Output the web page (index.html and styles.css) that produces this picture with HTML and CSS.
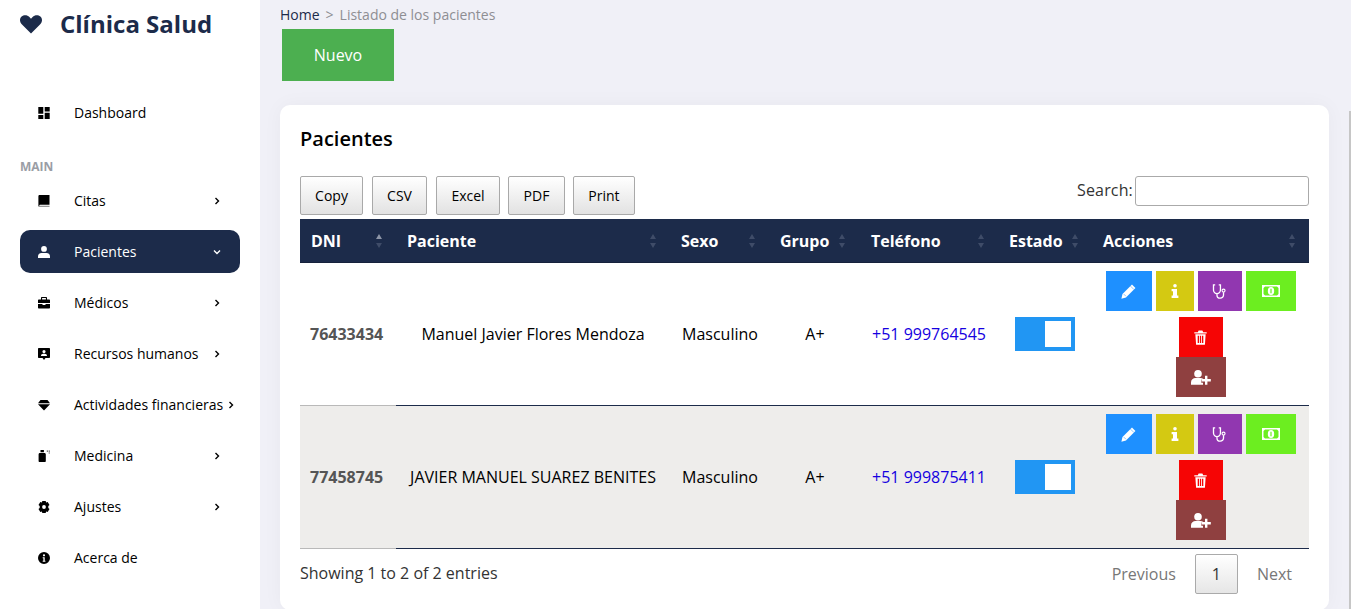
FILE: index.html
```html
<!DOCTYPE html>
<html lang="es">
<head>
<meta charset="utf-8">
<title>Clínica Salud</title>
<link rel="stylesheet" href="styles.css">
</head>
<body>
<svg class="defs" width="0" height="0" aria-hidden="true">
  <symbol id="i-pencil" viewBox="0 0 16 16"><path d="M11.700 .6 15.400 4.300 5.300 14.400 .4 15.600 1.600 10.700Z" fill="currentColor"/><path d="M10.200 2.300 13.700 5.800M3 10.800 5.200 13" stroke="#1e90ff" stroke-width=".8" opacity=".7"/></symbol>
  <symbol id="i-info" viewBox="0 0 8 14"><circle cx="4" cy="1.800" r="1.800" fill="currentColor"/><path d="M.6 5h5.400v6.600H7.400V14H.6V11.600H2V7.300H.6Z" fill="currentColor"/></symbol>
  <symbol id="i-steth" viewBox="0 0 16 16"><path d="M3.400 1H1.600V6.500a3.700 3.700 0 0 0 7.400 0V1H7.200M5.300 10.200v1.400a3.500 3.500 0 0 0 7 0V8.800" fill="none" stroke="currentColor" stroke-width="1.400"/><circle cx="12.300" cy="7" r="1.600" fill="none" stroke="currentColor" stroke-width="1.200"/></symbol>
  <symbol id="i-money" viewBox="0 0 18 12"><path fill-rule="evenodd" d="M0 0h18v12H0ZM3 1.500 1.500 3V9L3 10.500H15L16.500 9V3L15 1.500Z" fill="currentColor"/><ellipse cx="9" cy="6" rx="3.200" ry="4" fill="currentColor"/><path d="M8.400 3.700h1.200v4.600H8.400Z" fill="#6cee20"/></symbol>
  <symbol id="i-trash" viewBox="0 0 14 16"><path fill-rule="evenodd" d="M.4 2.400h3.700L5 .4h4l.9 2h3.700v1.400H.4ZM1.500 4.600h11L11.700 15.600H2.300ZM4 6.200v7.600h1.400V6.200ZM6.300 6.200v7.600h1.400V6.200ZM8.600 6.200v7.600h1.400V6.200Z" fill="currentColor"/></symbol>
  <symbol id="i-useradd" viewBox="0 0 20 15"><circle cx="7" cy="3.800" r="3.800" fill="currentColor"/><path d="M0 14.800V12.500C0 9.600 2.200 8 4.500 8H9.500C10.500 8 11.300 8.300 12 8.800V9.500H10.300V12.700H12V14.800Z" fill="currentColor"/><path d="M14 5.800h2.400v3.300h3.400v2.400h-3.400v3.300H14v-3.300h-3.400V9.100H14Z" fill="currentColor"/></symbol>
</svg>
<div class="app">
  <aside class="sidebar">
    <div class="brand">
      <svg class="brand-heart" viewBox="0 0 22 19"><path d="M11 18.600 2 9.600C-.6 7-.6 3.300 1.600 1.500 3.900-.5 7.400-.2 9.400 2L11 3.700 12.600 2C14.600-.2 18.100-.5 20.400 1.500 22.600 3.300 22.600 7 20 9.600Z" fill="currentColor"/></svg>
      <span class="brand-name">Clínica Salud</span>
    </div>
    <nav class="nav">
      <a class="nav-item">
        <svg class="nav-icon" viewBox="0 0 12 12"><path d="M.3 0h5v6.800h-5ZM6.700 0h5v4.500h-5ZM.3 8h5v4h-5ZM6.700 5.700h5V12h-5Z" fill="currentColor"/></svg>
        <span class="nav-label">Dashboard</span>
      </a>
      <div class="nav-title">MAIN</div>
      <a class="nav-item">
        <svg class="nav-icon" viewBox="0 0 12 12"><path d="M1.700 0H11.500V9.800H2.200C1.500 9.800 1.200 10.400 1.300 11.200L1.700 12C.9 12 .4 11.500.4 10.800V1.300C.4.500.9 0 1.700 0Z" fill="currentColor"/><path d="M1.700 10.700H11.500V12H1.700Z" fill="currentColor" opacity=".4"/></svg>
        <span class="nav-label">Citas</span>
        <svg class="chev" viewBox="0 0 8 8"><path d="M2.500 1 5.500 4 2.500 7" fill="none" stroke="currentColor" stroke-width="1.400"/></svg>
      </a>
      <a class="nav-item active">
        <svg class="nav-icon" viewBox="0 0 12 12"><circle cx="6" cy="2.900" r="2.900" fill="currentColor"/><path d="M0 12V10.300C0 8.300 1.600 6.900 3.500 6.900H8.500C10.400 6.900 12 8.300 12 10.300V12Z" fill="currentColor"/></svg>
        <span class="nav-label">Pacientes</span>
        <svg class="chev" viewBox="0 0 8 8"><path d="M1 2.500 4 5.500 7 2.500" fill="none" stroke="currentColor" stroke-width="1.400"/></svg>
      </a>
      <a class="nav-item">
        <svg class="nav-icon" viewBox="0 0 12 12"><path fill-rule="evenodd" d="M4 0h4c.6 0 1 .4 1 1v1.500h2c.6 0 1 .4 1 1V6H0V3.500c0-.6.4-1 1-1h2V1c0-.6.4-1 1-1ZM4.100 1.100V2.500H7.900V1.100ZM0 7h4.500v1h3V7H12v3.500c0 .6-.4 1-1 1H1c-.6 0-1-.4-1-1Z" fill="currentColor"/></svg>
        <span class="nav-label">Médicos</span>
        <svg class="chev" viewBox="0 0 8 8"><path d="M2.500 1 5.500 4 2.500 7" fill="none" stroke="currentColor" stroke-width="1.400"/></svg>
      </a>
      <a class="nav-item">
        <svg class="nav-icon" viewBox="0 0 12 12"><path fill-rule="evenodd" d="M1 0h10c.6 0 1 .4 1 1v8c0 .6-.4 1-1 1H7.500L6 12 4.500 10H1c-.6 0-1-.4-1-1V1c0-.6.4-1 1-1ZM6 2a1.600 1.600 0 1 0 0 3.200A1.600 1.600 0 0 0 6 2ZM3 8h6c0-1.500-1-2.300-2.200-2.300H5.200C4 5.700 3 6.500 3 8Z" fill="currentColor"/></svg>
        <span class="nav-label">Recursos humanos</span>
        <svg class="chev" viewBox="0 0 8 8"><path d="M2.500 1 5.500 4 2.500 7" fill="none" stroke="currentColor" stroke-width="1.400"/></svg>
      </a>
      <a class="nav-item">
        <svg class="nav-icon" viewBox="0 0 12 12"><path d="M2.500 1h7L12 4.200H0ZM0 5.300h12L6 11.500Z" fill="currentColor"/></svg>
        <span class="nav-label">Actividades financieras</span>
        <svg class="chev chev-tight" viewBox="0 0 8 8"><path d="M2.500 1 5.500 4 2.500 7" fill="none" stroke="currentColor" stroke-width="1.400"/></svg>
      </a>
      <a class="nav-item">
        <svg class="nav-icon" viewBox="0 0 12 12"><path d="M2.500 0h3.400v2.300H2.500ZM1.900 3h4.500C7.300 3 7.800 3.600 7.800 4.400V11c0 .6-.4 1-1 1H1.600C1 12 .6 11.600.6 11V4.300C.6 3.600 1.200 3 1.900 3Z" fill="currentColor"/><path d="M8.800.6h1.100v1.100H8.800ZM10.700.6h1.100v1.100h-1.100ZM10.700 2.400h1.100v1.100h-1.100Z" fill="currentColor" opacity=".75"/></svg>
        <span class="nav-label">Medicina</span>
        <svg class="chev" viewBox="0 0 8 8"><path d="M2.500 1 5.500 4 2.500 7" fill="none" stroke="currentColor" stroke-width="1.400"/></svg>
      </a>
      <a class="nav-item">
        <svg class="nav-icon" viewBox="0 0 12 12"><path fill-rule="evenodd" d="M4.300 0h3.400l.4 1.600 1.600-.5L11.500 4l-1.200 1.100v1.800L11.500 8l-1.800 2.900-1.600-.5L7.700 12H4.300l-.4-1.600-1.600.5L.5 8l1.200-1.100V5.100L.5 4l1.800-2.900 1.600.5ZM6 4.100a1.900 1.900 0 1 0 0 3.800 1.900 1.900 0 0 0 0-3.800Z" fill="currentColor"/></svg>
        <span class="nav-label">Ajustes</span>
        <svg class="chev" viewBox="0 0 8 8"><path d="M2.500 1 5.500 4 2.500 7" fill="none" stroke="currentColor" stroke-width="1.400"/></svg>
      </a>
      <a class="nav-item">
        <svg class="nav-icon" viewBox="0 0 12 12"><path fill-rule="evenodd" d="M6 0a6 6 0 1 1 0 12A6 6 0 0 1 6 0ZM6 2.200a1.100 1.100 0 1 0 0 2.200 1.100 1.100 0 0 0 0-2.200ZM4.700 5.200v1.100h.7v2.400h-.7v1.100h2.700V8.700h-.7V5.200Z" fill="currentColor"/></svg>
        <span class="nav-label">Acerca de</span>
      </a>
    </nav>
  </aside>
  <main class="main">
    <div class="crumbs"><a class="crumb-home">Home</a><span class="crumb-sep">&gt;</span><span class="crumb-current">Listado de los pacientes</span></div>
    <button class="btn-new">Nuevo</button>
    <section class="card">
      <h1 class="card-title">Pacientes</h1>
      <div class="toolbar">
        <div class="export">
          <button class="btn-export">Copy</button>
          <button class="btn-export">CSV</button>
          <button class="btn-export">Excel</button>
          <button class="btn-export">PDF</button>
          <button class="btn-export">Print</button>
        </div>
        <label class="search">Search:<input class="search-input" type="search"></label>
      </div>
      <table class="table">
        <colgroup>
          <col class="c1"><col class="c2"><col class="c3"><col class="c4"><col class="c5"><col class="c6"><col class="c7">
        </colgroup>
        <thead>
          <tr>
            <th><span>DNI</span><i class="sort sort-up"></i></th>
            <th><span>Paciente</span><i class="sort"></i></th>
            <th><span>Sexo</span><i class="sort"></i></th>
            <th><span>Grupo</span><i class="sort"></i></th>
            <th><span>Teléfono</span><i class="sort"></i></th>
            <th><span>Estado</span><i class="sort"></i></th>
            <th><span>Acciones</span><i class="sort"></i></th>
          </tr>
        </thead>
        <tbody>
          <tr>
            <td class="dni">76433434</td>
            <td>Manuel Javier Flores Mendoza</td>
            <td class="sex">Masculino</td>
            <td class="grp">A+</td>
            <td class="tel">+51 999764545</td>
            <td><span class="switch"><span class="knob"></span></span></td>
            <td class="acts">
              <div class="act-row">
                <a class="act edit"><svg viewBox="0 0 16 16" class="ai"><use href="#i-pencil"/></svg></a>
                <a class="act info"><svg viewBox="0 0 8 14" class="ai ai-i"><use href="#i-info"/></svg></a>
                <a class="act steth"><svg viewBox="0 0 16 16" class="ai"><use href="#i-steth"/></svg></a>
                <a class="act money"><svg viewBox="0 0 18 12" class="ai ai-w"><use href="#i-money"/></svg></a>
              </div>
              <div class="act-row"><a class="act trash"><svg viewBox="0 0 14 16" class="ai"><use href="#i-trash"/></svg></a></div>
              <div class="act-row"><a class="act adduser"><svg viewBox="0 0 20 15" class="ai ai-u"><use href="#i-useradd"/></svg></a></div>
            </td>
          </tr>
          <tr class="alt">
            <td class="dni">77458745</td>
            <td>JAVIER MANUEL SUAREZ BENITES</td>
            <td class="sex">Masculino</td>
            <td class="grp">A+</td>
            <td class="tel">+51 999875411</td>
            <td><span class="switch"><span class="knob"></span></span></td>
            <td class="acts">
              <div class="act-row">
                <a class="act edit"><svg viewBox="0 0 16 16" class="ai"><use href="#i-pencil"/></svg></a>
                <a class="act info"><svg viewBox="0 0 8 14" class="ai ai-i"><use href="#i-info"/></svg></a>
                <a class="act steth"><svg viewBox="0 0 16 16" class="ai"><use href="#i-steth"/></svg></a>
                <a class="act money"><svg viewBox="0 0 18 12" class="ai ai-w"><use href="#i-money"/></svg></a>
              </div>
              <div class="act-row"><a class="act trash"><svg viewBox="0 0 14 16" class="ai"><use href="#i-trash"/></svg></a></div>
              <div class="act-row"><a class="act adduser"><svg viewBox="0 0 20 15" class="ai ai-u"><use href="#i-useradd"/></svg></a></div>
            </td>
          </tr>
        </tbody>
      </table>
      <div class="foot">
        <div class="info-text">Showing 1 to 2 of 2 entries</div>
        <div class="pager"><a class="page-link">Previous</a><a class="page-current">1</a><a class="page-link">Next</a></div>
      </div>
    </section>
  </main>
</div>
<div class="scroll-thumb"></div>
</body>
</html>
```
FILE: styles.css
```css
* { box-sizing: border-box; }
html, body { margin: 0; height: 100%; overflow: hidden; }
body { font-family: "Open Sans", sans-serif; font-size: 14px; color: #000; background: #f0f0f7; }
.defs { position: absolute; }
.app { display: flex; height: 609px; }
.scroll-thumb { position: absolute; right: 0; top: 111px; bottom: 0; width: 2px; background: #c6c6c6; }

.sidebar { width: 260px; flex: none; background: #fff; padding: 0 20px; }
.brand { display: flex; align-items: flex-start; height: 50px; color: #1c2b4a; }
.brand-heart { width: 22px; height: 19px; margin: 15px 18px 0 0; }
.brand-name { font-size: 24px; font-weight: 700; line-height: 48px; }
.nav { display: flex; flex-direction: column; padding-top: 41px; }
.nav-item { display: flex; align-items: center; height: 43px; margin-bottom: 8px; padding: 0 19px 0 18px; border-radius: 10px; color: #000; }
.nav-icon { width: 12px; height: 12px; flex: none; margin-right: 24px; }
.nav-label { flex: 1; white-space: nowrap; }
.chev { width: 8px; height: 8px; flex: none; }
.chev-tight { margin-left: 4px; }
.nav-title { font-size: 12px; font-weight: 700; color: #9a9da5; line-height: 16px; margin: 17px 0 4px; }
.nav-item.active { background: #1c2b4a; color: #fff; }

.main { flex: 1; min-width: 0; padding: 4px 22px 0 20px; }
.crumbs { display: flex; align-items: center; height: 21px; line-height: 21px; }
.crumb-home { color: #1c2b4a; }
.crumb-sep { color: #8e8e93; margin: 0 6px; }
.crumb-current { color: #8e8e93; }
.btn-new { display: block; width: 112px; height: 52px; margin: 4px 0 0 2px; border: 0; background: #4caf50; color: #fff; font: 16px "Open Sans", sans-serif; }
.card { margin-top: 24px; background: #fff; border-radius: 10px; padding: 20px 20px 0; height: 505px; box-shadow: 0 0 20px rgba(0,0,0,.04); }
.card-title { margin: 0; font-size: 20px; font-weight: 600; line-height: 27px; }
.toolbar { display: flex; justify-content: space-between; align-items: flex-start; margin-top: 24px; height: 43px; }
.export { display: flex; }
.btn-export { height: 39px; padding: 0; border: 1px solid #a9a9a9; border-radius: 2px; background: linear-gradient(#fff, #e2e2e2); color: #000; font: 14px "Open Sans", sans-serif; }
.btn-export:nth-child(1) { width: 63px; margin-right: 9px; }
.btn-export:nth-child(2) { width: 55px; margin-right: 9px; }
.btn-export:nth-child(3) { width: 64px; margin-right: 8px; }
.btn-export:nth-child(4) { width: 57px; margin-right: 8px; }
.btn-export:nth-child(5) { width: 62px; }
.search { display: flex; align-items: flex-start; gap: 2px; font-size: 16px; line-height: 28px; color: #333; height: 30px; letter-spacing: .01em; }
.search-input { width: 174px; height: 30px; border: 1px solid #aaa; border-radius: 3px; background: #fff; outline: 0; }

.table { width: 1009px; border-collapse: separate; border-spacing: 0; table-layout: fixed; font-size: 16px; }
.c1 { width: 96px; } .c2 { width: 274px; } .c3 { width: 99px; } .c4 { width: 90px; } .c5 { width: 139px; } .c6 { width: 94px; } .c7 { width: 217px; }
th { position: relative; height: 44px; padding: 0 0 0 11px; background: #1c2b4a; color: #fff; text-align: left; font-weight: 700; border-bottom: 1px solid #16223c; }
th:nth-child(5) { padding-left: 12px; }
.sort { position: absolute; right: 13px; top: 15px; width: 7px; height: 14px; }
.sort::before, .sort::after { content: ""; position: absolute; left: 0; border-left: 3.5px solid transparent; border-right: 3.5px solid transparent; }
.sort::before { top: 0; border-bottom: 5px solid #3f4c68; }
.sort::after { bottom: 0; border-top: 5px solid #3f4c68; }
.sort-up::before { border-bottom-color: #8d95a7; }
td { height: 143px; padding: 0; text-align: center; border-bottom: 1px solid #1c2b4a; vertical-align: middle; color: #000; }
td.dni { font-weight: 700; color: #555; text-align: left; padding-left: 10px; border-bottom-color: #b9b9b9; }
td.sex { padding-left: 1px; }
td.grp { padding-left: 2px; }
tr.alt td { background: #eeedeb; }
td.tel { color: #1500e0; padding-left: 1px; }
.switch { display: block; width: 60px; height: 34px; margin: 0 auto; background: #2196f3; position: relative; }
.knob { position: absolute; right: 4px; top: 4px; width: 26px; height: 26px; background: #fff; }
td.acts { padding: 0 0 6px; vertical-align: top; }
.act-row { display: flex; justify-content: center; }
.act-row:first-child { gap: 4px; padding-top: 8px; height: 54px; }
.act { display: flex; align-items: center; justify-content: center; height: 40px; color: #fff; }
.ai { width: 15px; height: 15px; }
.ai-i { width: 8px; height: 14px; }
.ai-w { width: 18px; height: 12px; }
.ai-u { width: 20px; height: 15px; }
.edit { width: 46px; background: #1e90ff; }
.info { width: 38px; background: #d4c912; }
.steth { width: 44px; background: #9137b0; }
.money { width: 50px; background: #6cee20; }
.trash { width: 44px; background: #f60505; }
.adduser { width: 50px; background: #8f4040; }

.foot { display: flex; justify-content: space-between; align-items: flex-start; }
.info-text { font-size: 16px; color: #333; line-height: 22px; margin-top: 13px; }
.pager { display: flex; align-items: center; font-size: 16px; color: #777; margin-top: 5px; padding-right: 4px; }
.page-link { padding: 0 13px; line-height: 40px; }
.page-current { width: 43px; height: 40px; line-height: 38px; margin: 0 6px; text-align: center; border: 1px solid #aaa; border-radius: 2px; background: linear-gradient(#fff, #e6e6e6); color: #333; }
```
